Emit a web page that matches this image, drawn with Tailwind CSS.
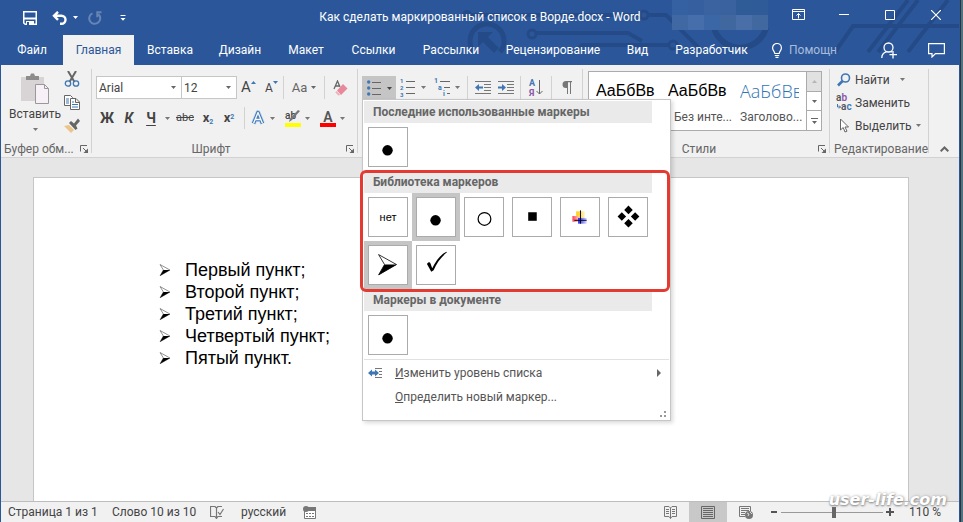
<!DOCTYPE html>
<html lang="ru">
  <head>
    <meta charset="UTF-8" />
    <meta name="viewport" content="width=device-width, initial-scale=1.0" />
    <script src="https://cdn.jsdelivr.net/npm/@tailwindcss/browser@4"></script>
    <title>Как сделать маркированный список в Ворде.docx - Word</title>
  </head>
  <body class="bg-[#4d7385] font-[Roboto,'Open_Sans',sans-serif] text-xs text-[#444] select-none">
    <!-- shared icons -->
    <svg class="hidden">
      <symbol id="caret" viewBox="0 0 5 3"><path d="M0 0h5L2.500 3z" fill="currentColor" /></symbol>
      <symbol id="launcher" viewBox="0 0 8 8">
        <path d="M.5 6.500V.5H7M3 3l3.500 3.500" fill="none" stroke="currentColor" />
        <path d="M8 3.500V8H3.500z" fill="currentColor" />
      </symbol>
      <symbol id="arrow" viewBox="0 0 20 22">
        <path d="M1 1l18 10L1 21.500 7 11z" fill="#fff" stroke="#000" stroke-width=".8" />
        <path d="M7 11h12.500L1 21.500z" fill="#000" />
      </symbol>
    </svg>

    <div class="flex min-h-screen flex-col mr-[3px] border-x border-[#2b579a] bg-[#e6e6e6] shadow-[1px_0_0_#2e3338]">
      <!-- header -->
      <header class="relative bg-[#2b579a] text-white">
        <svg class="absolute right-0 top-0" width="500" height="53" viewBox="459 0 500 53" fill="none" stroke="#244b87" stroke-width="4">
          <path d="M474 52a17 17 0 1 1 26 0" stroke-width="5" />
          <path d="M478 47V32h15l-5 5 11 11-5 5-11-11z" fill="#244b87" stroke="none" />
          <circle cx="467" cy="15" r="5" fill="#244b87" stroke="none" />
          <path d="M467 15h173M536 33h92l14 8M576 52l6-7h58" />
          <circle cx="532" cy="34" r="4" stroke-width="3" />
          <circle cx="644" cy="15" r="4" stroke-width="3" />
          <path d="M648 15h18l38 38M640 45h29" />
          <circle cx="673" cy="45" r="4" stroke-width="3" />
          <path d="M714 28a27 27 0 0 0 52 0" stroke-width="6" />
          <path d="M835 52l18-26h106M868 52l40-52M878 52l40-52M908 52l40-52" />
        </svg>

        <div class="relative grid h-[35px] grid-cols-[1fr_auto_1fr]">
          <div class="flex items-center pl-[21px]">
            <button aria-label="Сохранить">
              <svg width="16" height="16" viewBox="0 0 16 16" fill="none" stroke="#fff" stroke-width="1.500">
                <path d="M1.750 1.750h12.500v12.500h-11L1.750 13z" />
                <path d="M2 8.500h12" stroke-width="2" />
                <path d="M4 11h8v4H4z" fill="#fff" stroke="none" />
                <path d="M5 12h2v3H5z" fill="#2b579a" stroke="none" />
              </svg>
            </button>
            <button class="ml-3.5 flex items-center gap-1.5" aria-label="Отменить">
              <svg width="15" height="14" viewBox="0 0 15 14" fill="none" stroke="#fff" stroke-width="2.400">
                <path d="M6 .8L2 4.800l4 4M2 4.800h7.500a4 4 0 0 1 0 8H8" />
              </svg>
              <svg width="5" height="3"><use href="#caret" /></svg>
            </button>
            <button class="ml-2.5 text-[#6784b5]" aria-label="Повторить">
              <svg width="14" height="14" viewBox="0 0 14 14" fill="none" stroke="currentColor" stroke-width="2">
                <path d="M4.500 2.300A5.500 5.500 0 1 0 10.500 3.300M13.500 1.300H9.300v5" />
              </svg>
            </button>
            <button class="ml-[18px]" aria-label="Настройка панели быстрого доступа">
              <svg width="6" height="6" viewBox="0 0 6 6" fill="#fff"><path d="M.5 0h5v1h-5zM.5 3h5L3 5.700z" /></svg>
            </button>
          </div>
          <h1 class="self-center pb-0.5">Как сделать маркированный список в Ворде.docx - Word</h1>
          <div class="flex justify-end">
            <div class="mr-[7px] grid h-[30px] w-[96px] grid-cols-6 grid-rows-2">
              <i class="bg-[#3560a1]"></i><i class="bg-[#355f9f]"></i><i class="bg-[#3a639f]"></i><i class="bg-[#3a629e]"></i><i class="bg-[#2f5b96]"></i><i class="bg-[#305b99]"></i>
              <i class="bg-[#4068a2]"></i><i class="bg-[#456eab]"></i><i class="bg-[#3c67a6]"></i><i class="bg-[#41679f]"></i><i class="bg-[#4a6fa8]"></i><i class="bg-[#41689f]"></i>
            </div>
            <button class="flex w-[46px] items-center justify-center pb-1.5" aria-label="Параметры отображения ленты">
              <svg width="13" height="11" viewBox="0 0 13 11" fill="none" stroke="#fff"><path d="M.5.5h12v10H.5zM.5 2.500h12M6.500 9.500v-5M4.500 6.500l2-2 2 2" /></svg>
            </button>
            <button class="flex w-[46px] items-center justify-center pb-1.5" aria-label="Свернуть">
              <svg width="10" height="1"><path d="M0 0h10v1H0z" fill="#fff" /></svg>
            </button>
            <button class="flex w-[46px] items-center justify-center pb-1.5" aria-label="Развернуть">
              <svg width="10" height="10" fill="none" stroke="#fff"><path d="M.5.5h9v9h-9z" /></svg>
            </button>
            <button class="flex w-[46px] items-center justify-center pb-1.5" aria-label="Закрыть">
              <svg width="10" height="10" fill="none" stroke="#fff" stroke-width="1.200"><path d="M0 0l10 10M10 0L0 10" /></svg>
            </button>
          </div>
        </div>

        <nav class="relative flex h-[30px] whitespace-nowrap">
          <button class="w-[62px]">Файл</button>
          <button class="w-[71px] bg-[#f1f1f1] text-[#2b579a]">Главная</button>
          <button class="w-[72px]">Вставка</button>
          <button class="w-[68px]">Дизайн</button>
          <button class="w-[64px]">Макет</button>
          <button class="w-[71px]">Ссылки</button>
          <button class="w-[84px]">Рассылки</button>
          <button class="w-[120px]">Рецензирование</button>
          <button class="w-[49px]">Вид</button>
          <button class="w-[99px]">Разработчик</button>
          <button class="ml-2.5 flex items-center gap-1.5 text-[#a9bcdb]">
            <svg width="12" height="15" viewBox="0 0 12 15" fill="none" stroke="#fff" stroke-width="1.200"><path d="M3.800 10.500C3.800 8.500 1.600 7.500 1.600 4.900a4.400 4.400 0 0 1 8.800 0c0 2.600-2.200 3.600-2.200 5.600zM3.800 12.500h4.400M4.500 14.300h3" /></svg>
            Помощн
          </button>
          <button class="ml-auto w-[46px] pl-3.5" aria-label="Общий доступ">
            <svg width="16" height="17" viewBox="0 0 16 17" fill="none" stroke="#fff" stroke-width="1.300"><circle cx="7.500" cy="5.500" r="4.500" /><path d="M.8 16c0-3.500 2-5.500 4.500-6.200M10 9.500l1 .7M12 9v7.500M8.500 12.700H16" /></svg>
          </button>
          <button class="flex w-[46px] items-center justify-center" aria-label="Примечания">
            <svg width="17" height="15" viewBox="0 0 17 15" fill="none" stroke="#fff" stroke-width="1.200"><path d="M.6.600h15.800v10H7.500L4 14v-3.400H.6z" /></svg>
          </button>
        </nav>
      </header>

      <!-- ribbon -->
      <section class="relative z-10 flex h-[93px] border-b border-[#d2d2d2] bg-[#f1f1f1]">
        <div class="flex w-[90px] flex-col justify-between">
          <div class="flex pt-1.5">
            <button class="flex w-[60px] flex-col items-center justify-start pl-2">
              <svg class="mt-0.5" width="30" height="31" viewBox="0 0 30 31">
                <path d="M1 4h23v24H1z" fill="#d8d4d6" />
                <path d="M6 7V3h4l1-2.500h3L15 3h4v4z" fill="#8c8c8c" />
                <path d="M15.500 11.500h9l4 4v15h-13z" fill="#f7f0f7" stroke="#999" />
                <path d="M24.500 11.500v4h4" fill="none" stroke="#999" />
              </svg>
              <span class="leading-5">Вставить</span>
              <svg class="mt-1 text-[#777]" width="5" height="3"><use href="#caret" /></svg>
            </button>
            <div class="flex flex-col items-center gap-2 pl-[3px]">
              <button aria-label="Вырезать">
                <svg width="16" height="16" viewBox="0 0 16 16" fill="none">
                  <path d="M4 0l6.500 11M12 0L5.500 11" stroke="#666" stroke-width="2" />
                  <circle cx="4" cy="12.500" r="2.700" stroke="#3f77b4" stroke-width="1.300" /><circle cx="12" cy="12.500" r="2.700" stroke="#3f77b4" stroke-width="1.300" />
                </svg>
              </button>
              <button aria-label="Копировать">
                <svg width="16" height="15" viewBox="0 0 16 15" fill="#fff" stroke="#666">
                  <path d="M.5.500h6l2 2v8h-8z" /><path d="M6.500 3.500h5.500l3.500 3.500v7.500h-9zM11.500 3.500v4h4" />
                  <path d="M2 4h3M2 6h3M2 8h3M8 7h2M8 9.500h6M8 12h6" stroke="#3f77b4" />
                </svg>
              </button>
              <button aria-label="Формат по образцу">
                <svg width="16" height="15" viewBox="0 0 16 15"><path d="M0 8l5-1 5 5-3 3z" fill="#ecc488" /><path d="M5 5l2-2 3 2.500L14 .5 16 3l-4 4.500 1.500 3-2 1.500z" fill="#666" /></svg>
              </button>
            </div>
          </div>
          <div class="flex h-4 justify-between pl-[3px] pr-[3px] leading-4 text-[#666]">
            <span>Буфер обм...</span>
            <button aria-label="Буфер обмена"><svg width="8" height="8"><use href="#launcher" /></svg></button>
          </div>
        </div>
        <div class="mb-1 mt-1 w-px bg-[#d2d2d2]"></div>

        <div class="flex w-[265px] flex-col justify-between">
          <div class="flex flex-col gap-2 pl-1 pt-[11px]">
            <div class="flex h-[23px]">
              <label class="relative w-[86px]">
                <select class="h-full w-full appearance-none border border-[#c6c6c6] bg-white pl-0.5 text-xs" aria-label="Шрифт"><option>Arial</option></select>
                <svg class="absolute right-1.5 top-2.5 text-[#666]" width="5" height="3"><use href="#caret" /></svg>
              </label>
              <label class="relative -ml-px w-[56px]">
                <select class="h-full w-full appearance-none border border-[#c6c6c6] bg-white pl-0.5 text-xs" aria-label="Размер шрифта"><option>12</option></select>
                <svg class="absolute right-1.5 top-2.5 text-[#666]" width="5" height="3"><use href="#caret" /></svg>
              </label>
              <button class="flex w-[23px] items-center justify-center text-[15px]" aria-label="Увеличить размер шрифта">A<svg class="mb-2.5" width="5" height="3" viewBox="0 0 5 3" fill="#3f77b4"><path d="M0 3h5L2.500 0z" /></svg></button>
              <button class="flex w-[23px] items-center justify-center text-xs" aria-label="Уменьшить размер шрифта">A<svg class="mb-2.5 text-[#3f77b4]" width="5" height="3"><use href="#caret" /></svg></button>
              <div class="w-px bg-[#d2d2d2]"></div>
              <button class="flex w-10 items-center justify-center gap-1 text-[13px] text-[#666]" aria-label="Регистр">Aa<svg width="5" height="3"><use href="#caret" /></svg></button>
              <div class="w-px bg-[#d2d2d2]"></div>
              <button class="flex w-[30px] items-center justify-center" aria-label="Очистить формат">
                <svg width="15" height="16" viewBox="0 0 15 16"><path d="M1 9L4.500 1 7 7M2 6h4" fill="none" stroke="#666" stroke-width="1.300" /><path d="M10 4l4.500 4.500L8 15l-4-4.500z" fill="#e8899b" /><path d="M3.500 11l3.800 4-2 .5-3-3z" fill="#efb0bb" /></svg>
              </button>
            </div>
            <div class="flex h-[22px] items-center">
              <button class="w-[22px] text-sm font-bold">Ж</button>
              <button class="w-[22px] text-sm font-bold italic">К</button>
              <button class="w-[22px] text-sm font-bold underline underline-offset-2">Ч</button>
              <button class="flex h-full w-2.5 items-center justify-center text-[#777]" aria-label="Вид подчеркивания"><svg width="5" height="3"><use href="#caret" /></svg></button>
              <button class="w-[26px] text-[11px] line-through">abc</button>
              <button class="w-5 text-[13px] font-bold" aria-label="Подстрочный знак">x<sub class="text-[7px] text-[#3f77b4]">2</sub></button>
              <button class="w-[22px] text-[13px] font-bold" aria-label="Надстрочный знак">x<sup class="text-[7px] text-[#3f77b4]">2</sup></button>
              <div class="ml-1 h-full w-px bg-[#d2d2d2]"></div>
              <button class="flex w-[35px] items-center justify-center gap-1 text-[#777]" aria-label="Текстовые эффекты">
                <svg width="16" height="16" viewBox="0 0 16 16" fill="none" stroke-linejoin="round"><path d="M3.500 13.500L8 2.500l4.500 11M5 9.500h6" stroke="#c4d9ee" stroke-width="5" /><path d="M3.500 13.500L8 2.500l4.500 11M5 9.500h6" stroke="#3f77b4" stroke-width="3.400" /><path d="M3.500 13.500L8 2.500l4.500 11M5 9.500h6" stroke="#f4f8fc" stroke-width="1.400" /></svg>
                <svg width="5" height="3"><use href="#caret" /></svg>
              </button>
              <button class="flex w-[35px] items-center justify-center gap-1 text-[#777]" aria-label="Цвет выделения текста">
                <svg class="overflow-visible" width="16" height="17" viewBox="0 0 16 17"><text x="0" y="9" class="fill-[#444] text-[10px] font-medium">ab</text><path d="M15 1l-8 9-3 2 1-3.500L13 0z" fill="#777" /><path d="M0 13h16v4H0z" fill="#ff0" /></svg>
                <svg width="5" height="3"><use href="#caret" /></svg>
              </button>
              <button class="flex w-[35px] items-center justify-center gap-1 text-[#777]" aria-label="Цвет текста">
                <svg class="overflow-visible" width="16" height="17" viewBox="0 0 16 17"><text x="8" y="12" text-anchor="middle" class="fill-[#555] text-sm font-semibold">A</text><path d="M0 13h16v4H0z" fill="red" /></svg>
                <svg width="5" height="3"><use href="#caret" /></svg>
              </button>
            </div>
          </div>
          <div class="relative flex h-4 pr-[3px] leading-4 text-[#666]">
            <span class="flex-1 pr-4 text-center">Шрифт</span>
            <button aria-label="Параметры шрифта"><svg width="8" height="8"><use href="#launcher" /></svg></button>
          </div>
        </div>
        <div class="mb-1 mt-1 w-px bg-[#d2d2d2]"></div>

        <div class="flex w-[224px] pl-1 pt-[11px]">
          <div class="flex h-[23px] text-[#777]">
            <div class="relative">
              <button class="flex h-6 w-[34px] items-center justify-center gap-1.5 bg-[#c5c5c5] text-[#444]" aria-label="Маркеры">
                <svg width="14" height="16" viewBox="0 0 14 16"><g fill="#3f77b4"><circle cx="1.700" cy="2" r="1.700" /><circle cx="1.700" cy="8" r="1.700" /><circle cx="1.700" cy="14" r="1.700" /></g><path d="M5 2.500h9M5 8.500h9M5 14.500h9" stroke="#666" /></svg>
                <svg width="5" height="3"><use href="#caret" /></svg>
              </button>

              <!-- bullets menu -->
              <div class="absolute left-0 top-[23px] w-[309px] border border-[#c6c6c6] bg-white p-px text-[#555] shadow-[2px_2px_4px_rgba(0,0,0,0.15)]">
                <h2 class="h-[22px] w-[288px] bg-[#eaeaea] pl-[9px] font-bold leading-[22px] text-[#666]">Последние использованные маркеры</h2>
                <div class="flex">
                  <button class="size-12 p-1" aria-label="Круг"><svg class="border border-[#ababab] bg-white" width="40" height="40" viewBox="0 0 40 40"><circle cx="19.500" cy="23.500" r="5.500" /></svg></button>
                </div>

                <div class="relative">
                  <h2 class="h-[22px] w-[288px] bg-[#eaeaea] pl-[9px] font-bold leading-[22px] text-[#666]">Библиотека маркеров</h2>
                  <div class="flex w-[288px] flex-wrap">
                    <button class="size-12 p-1"><span class="flex size-10 items-center justify-center border border-[#ababab] bg-white font-['Liberation_Sans',sans-serif] text-[11px] text-black">нет</span></button>
                    <button class="size-12 bg-[#c5c5c5] p-1" aria-label="Круг"><svg class="border border-[#ababab] bg-white" width="40" height="40" viewBox="0 0 40 40"><circle cx="19.500" cy="23.500" r="5.500" /></svg></button>
                    <button class="size-12 p-1" aria-label="Окружность"><svg class="border border-[#ababab] bg-white" width="40" height="40" viewBox="0 0 40 40"><circle cx="20.500" cy="22" r="6.700" fill="none" stroke="#000" stroke-width="1.300" /></svg></button>
                    <button class="size-12 p-1" aria-label="Квадрат"><svg class="border border-[#ababab] bg-white" width="40" height="40" viewBox="0 0 40 40"><path d="M16 15h9v9h-9z" /></svg></button>
                    <button class="size-12 p-1" aria-label="Цветной крест">
                      <svg class="border border-[#ababab] bg-white" width="40" height="40" viewBox="0 0 40 40">
                        <defs>
                          <linearGradient id="yellow"><stop offset="0" stop-color="#fc0" /><stop offset="1" stop-color="#fff3c0" /></linearGradient>
                          <linearGradient id="red"><stop offset="0" stop-color="#ff4050" /><stop offset="1" stop-color="#ffc8c8" /></linearGradient>
                          <linearGradient id="blue"><stop offset="0" stop-color="#2020ff" /><stop offset="1" stop-color="#d8d8ff" /></linearGradient>
                        </defs>
                        <path d="M16 14h9v8h-9z" fill="url(#yellow)" /><path d="M12 19h7v6h-7z" fill="url(#red)" /><path d="M18 21h9v6h-9z" fill="url(#blue)" />
                        <path d="M20.500 13v14M14 23.500h13" fill="none" stroke="#000" />
                      </svg>
                    </button>
                    <button class="size-12 p-1" aria-label="Четыре ромба"><svg class="border border-[#ababab] bg-white" width="40" height="40" viewBox="0 0 40 40"><path d="M20.500 8l4.500 4.500-4.500 4.500-4.500-4.500zM20.500 22l4.500 4.500-4.500 4.500-4.500-4.500zM13.500 15l4.500 4.500-4.500 4.500L9 19.500zM27.500 15l4.500 4.500-4.500 4.500-4.500-4.500z" /></svg></button>
                    <button class="size-12 bg-[#c5c5c5] p-1" aria-label="Стрелка"><svg class="border border-[#ababab] bg-white" width="40" height="40" viewBox="0 0 40 40"><use href="#arrow" x="9" y="8" width="21" height="23" /></svg></button>
                    <button class="size-12 p-1" aria-label="Галочка"><svg class="border border-[#ababab] bg-white" width="40" height="40" viewBox="0 0 40 40"><path d="M10.500 19c1-2 3-2.500 3.500-1l2 5.500C20 15 25 9 31 6l.5.7C26 11 20.500 18 17.500 25.500L15 27z" /></svg></button>
                  </div>
                  <div class="pointer-events-none absolute -bottom-[3px] -left-1 -right-px -top-px rounded-md border-3 border-[#e33b32]"></div>
                </div>

                <h2 class="h-[22px] w-[288px] bg-[#eaeaea] pl-[9px] font-bold leading-[22px] text-[#666]">Маркеры в документе</h2>
                <div class="flex">
                  <button class="size-12 p-1" aria-label="Круг"><svg class="border border-[#ababab] bg-white" width="40" height="40" viewBox="0 0 40 40"><circle cx="19.500" cy="23.500" r="5.500" /></svg></button>
                </div>
                <div class="mb-px h-px bg-[#e1e1e1]"></div>
                <button class="flex h-6 w-full items-center pl-1 pr-2">
                  <svg class="mr-3" width="15" height="10" viewBox="0 0 15 10"><path d="M7 .5h7M11 3.500h3M11 6.500h3M7 9.500h7" stroke="#777" /><path d="M0 5l4-3.500v2h3v-2L11 5 7 8.500v-2H4v2z" fill="#3f77b4" /></svg>
                  <span><u>И</u>зменить уровень списка</span>
                  <svg class="ml-auto" width="4" height="8"><path d="M0 0l4 4-4 4z" fill="#666" /></svg>
                </button>
                <button class="flex h-6 w-full items-center pl-[31px]"><span><u>О</u>пределить новый маркер...</span></button>
                <svg class="ml-auto mr-[3px] mt-0.5 mb-0.5" width="6" height="6"><path d="M4 0h2v2H4zM0 4h2v2H0zM4 4h2v2H4z" fill="#999" /></svg>
              </div>
            </div>
            <button class="flex w-[34px] items-center justify-center gap-1.5" aria-label="Нумерация">
              <svg class="overflow-visible" width="15" height="17" viewBox="0 0 15 17"><g class="fill-[#3f77b4] text-[6px] font-bold"><text x="0" y="4">1</text><text x="0" y="11">2</text><text x="0" y="18">3</text></g><path d="M6 2.500h9M6 8.500h9M6 14.500h9" stroke="#666" /></svg>
              <svg width="5" height="3"><use href="#caret" /></svg>
            </button>
            <button class="flex w-[34px] items-center justify-center gap-1" aria-label="Многоуровневый список">
              <svg class="overflow-visible" width="17" height="17" viewBox="0 0 17 17"><g class="fill-[#3f77b4] text-[7px] font-bold"><text x="0" y="4">1</text><text x="4" y="11">a</text><text x="9" y="17">i</text></g><path d="M6 2.500h10M10 8.500h6M13 14.500h3" stroke="#666" /></svg>
              <svg width="5" height="3"><use href="#caret" /></svg>
            </button>
            <div class="mx-[3px] w-px bg-[#d2d2d2]"></div>
            <button class="flex w-[23px] items-center justify-center" aria-label="Уменьшить отступ">
              <svg width="16" height="13" viewBox="0 0 16 13"><path d="M0 .5h16M9 3.500h7M9 6.500h7M9 9.500h7M0 12.500h16" stroke="#777" /><path d="M0 6.500L4 3v2.500h4v2H4V10z" fill="#3f77b4" /></svg>
            </button>
            <button class="flex w-[23px] items-center justify-center" aria-label="Увеличить отступ">
              <svg width="16" height="13" viewBox="0 0 16 13"><path d="M0 .5h16M9 3.500h7M9 6.500h7M9 9.500h7M0 12.500h16" stroke="#777" /><path d="M8 6.500L4 3v2.500H0v2h4V10z" fill="#3f77b4" /></svg>
            </button>
            <div class="mx-[3px] w-px bg-[#d2d2d2]"></div>
            <button class="flex w-6 items-center justify-center" aria-label="Сортировка">
              <svg class="overflow-visible" width="14" height="18" viewBox="0 0 14 18"><text x="0" y="7" class="fill-[#3f77b4] text-[9px] font-bold">А</text><text x="0" y="17" class="fill-[#8b55a8] text-[9px] font-bold">Я</text><path d="M10.500 1v14M7.500 12l3 3 3-3" fill="none" stroke="#666" /></svg>
            </button>
            <div class="mx-[3px] w-px bg-[#d2d2d2]"></div>
            <button class="flex w-6 items-center justify-center" aria-label="Отобразить все знаки">
              <svg width="10" height="13" viewBox="0 0 10 13"><path d="M5 7H4A3.500 3.500 0 0 1 4 0h6v1.200H9V13H8V1.200H6V13H5z" fill="#777" /></svg>
            </button>
          </div>
        </div>
        <div class="mb-1 mt-1 w-px bg-[#d2d2d2]"></div>

        <div class="flex flex-1 flex-col justify-between pl-[5px] pt-1.5">
          <div class="mr-[7px] flex h-[60px] border border-[#ababab] bg-white">
            <div class="flex flex-1">
              <button class="w-[72px] pl-[7px] text-left">
                <span class="block w-[59px] overflow-hidden font-['Liberation_Sans',sans-serif] text-base leading-8 text-black">АаБбВв</span>
                <span class="block leading-5 text-[#555]">Обычный</span>
              </button>
              <button class="w-[72px] pl-[7px] text-left">
                <span class="block w-[59px] overflow-hidden font-['Liberation_Sans',sans-serif] text-base leading-8 text-black">АаБбВв</span>
                <span class="block whitespace-nowrap pl-1.5 leading-5 text-[#555]">Без инте...</span>
              </button>
              <button class="w-[72px] pl-[7px] text-left">
                <span class="block w-[59px] overflow-hidden font-['Open_Sans',sans-serif] text-lg font-light leading-8 text-[#2e74b5]">АаБбВв</span>
                <span class="block whitespace-nowrap leading-5 text-[#555]">Заголово...</span>
              </button>
            </div>
            <div class="flex w-[15px] flex-col divide-y divide-[#ababab] border-l border-[#ababab] text-[#666]">
              <button class="flex flex-1 items-center justify-center bg-[#e1e1e1]" aria-label="Вверх"><svg class="rotate-180 text-[#b5b5b5]" width="5" height="3"><use href="#caret" /></svg></button>
              <button class="flex flex-1 items-center justify-center" aria-label="Вниз"><svg width="5" height="3"><use href="#caret" /></svg></button>
              <button class="flex flex-1 items-center justify-center" aria-label="Дополнительно"><svg width="7" height="6" fill="currentColor"><path d="M0 0h7v1H0zM1 3h5L3.500 6z" /></svg></button>
            </div>
          </div>
          <div class="flex h-4 pr-[3px] leading-4 text-[#666]">
            <span class="flex-1 pr-2 text-center">Стили</span>
            <button aria-label="Стили"><svg width="8" height="8"><use href="#launcher" /></svg></button>
          </div>
        </div>
        <div class="mb-1 mt-1 w-px bg-[#d2d2d2]"></div>

        <div class="flex w-[98px] flex-col justify-between whitespace-nowrap pl-[7px]">
          <div class="flex flex-col pt-[3px]">
            <button class="flex h-[23px] items-center gap-1">
              <svg width="14" height="14" viewBox="0 0 14 14" fill="none" stroke="#3f77b4"><circle cx="8.500" cy="5" r="4" stroke-width="1.600" /><path d="M5.500 8L1 12.500" stroke-width="2.600" /></svg>
              Найти
              <svg class="ml-1.5 text-[#777]" width="5" height="3"><use href="#caret" /></svg>
            </button>
            <button class="flex h-[23px] items-center gap-[3px]">
              <svg class="overflow-visible text-[10px] font-semibold" width="15" height="16" viewBox="0 0 15 16"><text x="-1" y="6" fill="#555">a<tspan fill="#8b55a8">b</tspan></text><text x="4" y="15" fill="#555">a<tspan fill="#3f77b4">c</tspan></text><path d="M.5 9v3h3M2 10.500l1.500 1.500L2 13.500" fill="none" stroke="#3f77b4" /></svg>
              Заменить
            </button>
            <button class="flex h-[23px] items-center gap-1">
              <svg width="14" height="15" viewBox="0 0 14 15"><path d="M3.500 1v11l2.700-2.500L8 14l2-.8-2-4.200h3.500z" fill="#fff" stroke="#666" /></svg>
              Выделить
              <svg class="text-[#777]" width="5" height="3"><use href="#caret" /></svg>
            </button>
          </div>
          <span class="-ml-[3px] block h-4 leading-4 text-[#666]">Редактирование</span>
        </div>
        <div class="mb-1 mt-1 w-px bg-[#d2d2d2]"></div>
        <button class="flex w-[30px] items-end justify-center pb-[5px]" aria-label="Свернуть ленту"><svg width="9" height="6" fill="none" stroke="#666" stroke-width="2"><path d="M.7 5.300l3.800-3.800 3.800 3.800" /></svg></button>
      </section>

      <!-- document -->
      <main class="flex flex-1 pl-8 pr-[50px] pt-[19px]">
        <article class="flex-1 border border-b-0 border-[#c6c6c6] bg-white pl-[125px] pt-[81px]">
          <ul class="font-['Liberation_Sans',sans-serif] text-lg leading-[22px] text-black">
            <li class="flex items-center gap-3.5"><svg width="12" height="12"><use href="#arrow" /></svg>Первый пункт;</li>
            <li class="flex items-center gap-3.5"><svg width="12" height="12"><use href="#arrow" /></svg>Второй пункт;</li>
            <li class="flex items-center gap-3.5"><svg width="12" height="12"><use href="#arrow" /></svg>Третий пункт;</li>
            <li class="flex items-center gap-3.5"><svg width="12" height="12"><use href="#arrow" /></svg>Четвертый пункт;</li>
            <li class="flex items-center gap-3.5"><svg width="12" height="12"><use href="#arrow" /></svg>Пятый пункт.</li>
          </ul>
        </article>
      </main>

      <!-- status bar -->
      <footer class="relative flex h-[21px] items-center border-t border-[#bdbdbd] bg-[#f1f1f1] pl-[7px] pr-5">
        <span class="w-[104px]">Страница 1 из 1</span>
        <span class="w-[98px]">Слово 10 из 10</span>
        <button class="w-[31px]" aria-label="Правописание">
          <svg width="14" height="13" viewBox="0 0 14 13" fill="none" stroke="#777"><path d="M6.500 12.500V2L5 .5H.5v10H5zl1.500-2H12M6.500 2L8 .5h4M8 6l2 2.500L13.500 3" stroke-width="1.200" /></svg>
        </button>
        <button class="w-[62px] text-left">русский</button>
        <button aria-label="Запись макроса">
          <svg width="13" height="13" viewBox="0 0 13 13"><path d="M1.500 3.500h11v9h-11z" fill="#fff" stroke="#777" /><path d="M5 1h8v4H5z" fill="#777" /><circle cx="3" cy="3" r="3" fill="#777" /><path d="M3 7.500h8M3 10.500h8" stroke="#777" stroke-dasharray="2 1" /></svg>
        </button>
        <div class="ml-auto flex h-full items-center">
          <button class="flex w-[38px] justify-center" aria-label="Режим чтения">
            <svg width="13" height="13" viewBox="0 0 13 13" fill="none" stroke="#777"><path d="M6.500 12.500V2L5 .5H.5v10H5zL8 10.500h4.500V.5H8L6.500 2M2 3.500h3M2 5.500h3M2 7.500h3M8 3.500h3M8 5.500h3M8 7.500h3" /></svg>
          </button>
          <button class="flex h-full w-[38px] items-center justify-center bg-[#c8c8c8]" aria-label="Разметка страницы">
            <svg width="14" height="13" viewBox="0 0 14 13" fill="none" stroke="#666"><path d="M.5.5h13v12H.5zM2 2.500h10M2 4.500h10M2 6.500h10M2 8.500h10M2 10.500h10" /></svg>
          </button>
          <button class="flex w-[38px] justify-center" aria-label="Веб-документ">
            <svg width="14" height="13" viewBox="0 0 14 13" fill="none" stroke="#777"><path d="M11.500 5V.5H.5v10H6M2 2.500h8M2 4.500h8M2 6.500h4M2 8.500h4" /><circle cx="10" cy="9" r="4" fill="#777" stroke="none" /><path d="M8 7l2 1-1 2M11 6l2 2" stroke="#ddd" /></svg>
          </button>
          <button class="ml-1 flex w-2.5 justify-center" aria-label="Уменьшить"><svg width="6" height="2"><path d="M0 0h6v2H0z" fill="#555" /></svg></button>
          <input
            type="range"
            min="0"
            max="100"
            value="52"
            aria-label="Масштаб"
            class="mx-0.5 h-[11px] w-[102px] appearance-none bg-[linear-gradient(#999,#999)] bg-[length:100%_1px] bg-center bg-no-repeat [&::-webkit-slider-thumb]:h-[11px] [&::-webkit-slider-thumb]:w-1 [&::-webkit-slider-thumb]:appearance-none [&::-webkit-slider-thumb]:bg-[#666]"
          />
          <button class="flex w-2.5 justify-center" aria-label="Увеличить"><svg width="8" height="8"><path d="M3 0h2v3h3v2H5v3H3V5H0V3h3z" fill="#555" /></svg></button>
          <button class="ml-3.5 w-[30px] whitespace-nowrap">110 %</button>
        </div>
        <span class="absolute -top-3 right-3 font-['DejaVu_Sans',sans-serif] text-base font-bold italic leading-5 text-white [text-shadow:0_1px_2px_#888,1px_0_3px_#aaa]">user-life.com</span>
      </footer>
    </div>
  </body>
</html>
